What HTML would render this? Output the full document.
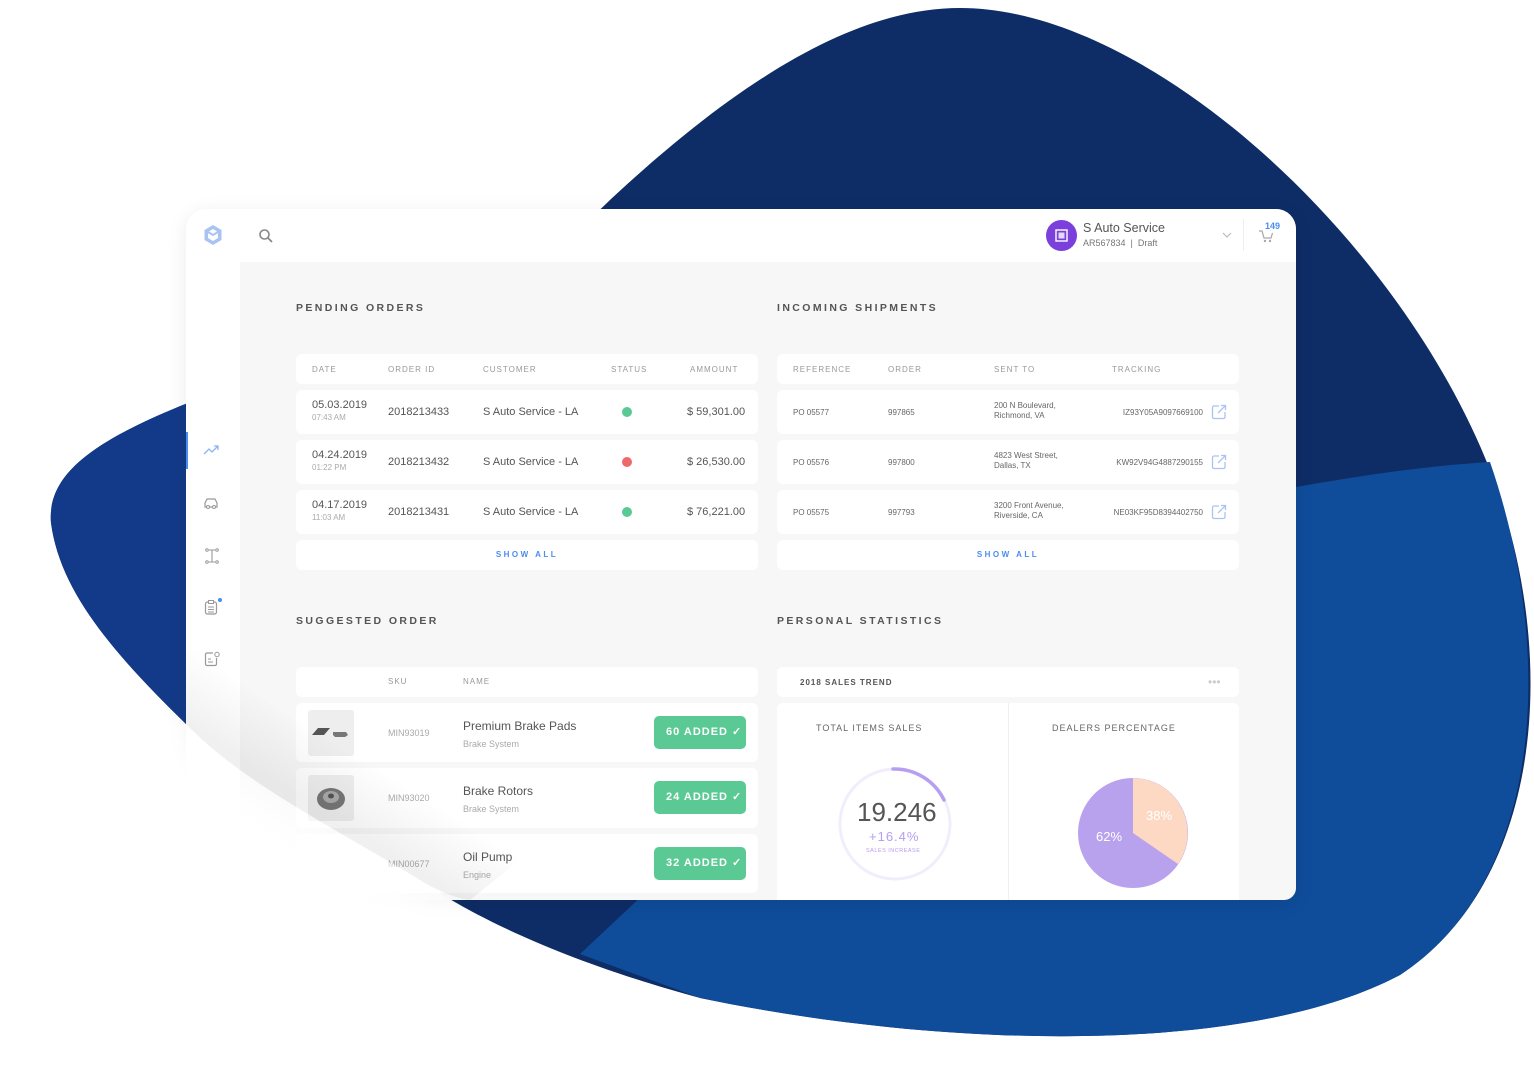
<!DOCTYPE html>
<html><head><meta charset="utf-8"><style>
*{margin:0;padding:0;box-sizing:border-box}
body{width:1534px;height:1081px;background:#fff;position:relative;overflow:hidden;font-family:"Liberation Sans",Arial,sans-serif;color:#555}
.abs{position:absolute}
#card{position:absolute;left:186px;top:209px;width:1110px;height:691px;border-radius:20px 20px 12px 0;background:#f7f7f7;overflow:hidden;box-shadow:0 4px 20px rgba(0,0,0,.08)}
.hdr{position:absolute;left:0;top:0;width:1110px;height:53px;background:#fff}
.side{position:absolute;left:0;top:53px;width:54px;height:640px;background:#fff}
.ttl{position:absolute;font-size:10.5px;letter-spacing:2.4px;color:#555;font-weight:bold}
.box{position:absolute;background:#fff;border-radius:6px}
.th{position:absolute;font-size:8px;letter-spacing:1px;color:#999}
.t{position:absolute;font-size:11px;color:#555;white-space:nowrap}
.s{position:absolute;font-size:8px;color:#aaa;white-space:nowrap}
.dot{position:absolute;width:10px;height:10px;border-radius:50%}
.sa{position:absolute;font-size:8px;letter-spacing:2.5px;color:#4a8cf0;font-weight:bold;width:100%;text-align:center;top:10px}
.btn{position:absolute;left:358px;width:92px;height:33px;background:#5ac994;border-radius:5px;color:#fff;font-size:11px;font-weight:bold;letter-spacing:1px;line-height:33px;padding-left:12px}
.img{position:absolute;left:12px;width:46px;height:46px;background:#eee;border-radius:3px}
</style></head><body>
<svg class="abs" style="left:0;top:0" width="1534" height="1081">
<path d="M51,523 C45,450 150,410 400,330 C470,300 560,250 610,200 C760,60 870,8 960,8 C1150,8 1400,240 1490,470 C1560,650 1545,880 1400,975 C1250,1055 950,1050 700,998 C560,960 470,915 420,880 C320,820 240,780 186,724 C110,650 60,590 51,523Z" fill="#0e2c66"/>
<path d="M51,523 C45,450 150,410 400,330 L600,330 L600,700 L420,880 C320,820 240,780 186,724 C110,650 60,590 51,523Z" fill="#133a88"/>
<path d="M1296,487 C1380,472 1440,465 1490,462 C1555,650 1545,880 1400,975 C1250,1055 950,1050 700,998 L580,954 L1000,560Z" fill="#0f4c9a"/>
</svg>
<div id="card">
 <div class="hdr"></div>
 <svg class="abs" style="left:17px;top:15px" width="20" height="22" viewBox="0 0 20 22"><path d="M10 1 L18.5 6 V16 L10 21 L1.5 16 V6Z" fill="#a9c3f3"/><path d="M10 5 L15 8 V14 L10 17 L5 14 V8Z" fill="#fff"/><path d="M5 8 L10 11 L15 8" stroke="#a9c3f3" stroke-width="2" fill="none"/></svg>
 <svg class="abs" style="left:72px;top:19px" width="16" height="16"><circle cx="6.5" cy="6.5" r="4.5" stroke="#888" stroke-width="1.6" fill="none"/><path d="M10 10 L14 14" stroke="#888" stroke-width="1.8"/></svg>
 <div class="abs" style="left:860px;top:11px;width:31px;height:31px;border-radius:50%;background:#7b3fdc"></div>
 <svg class="abs" style="left:868px;top:19px" width="15" height="15"><rect x="2" y="2" width="11" height="11" fill="none" stroke="#fff" stroke-width="1.4"/><rect x="4.5" y="4.5" width="6" height="6" fill="#fff" opacity=".8"/></svg>
 <div class="t" style="left:897px;top:12px;font-size:12.5px;color:#555">S Auto Service</div>
 <div class="t" style="left:897px;top:29px;font-size:9px;color:#777">AR567834 &nbsp;| &nbsp;Draft</div>
 <svg class="abs" style="left:1036px;top:22px" width="10" height="8"><path d="M1 2 L5 6 L9 2" stroke="#bbb" fill="none" stroke-width="1.2"/></svg>
 <div class="abs" style="left:1057px;top:10px;width:1px;height:32px;background:#eee"></div>
 <svg class="abs" style="left:1072px;top:20px" width="16" height="14"><path d="M1 2 H4 L6 9 H13 L14.5 4" stroke="#aaa" fill="none" stroke-width="1.3"/><circle cx="7" cy="12" r="1.2" fill="#aaa"/><circle cx="12" cy="12" r="1.2" fill="#aaa"/></svg>
 <div class="t" style="left:1079px;top:12px;font-size:9px;color:#4a8cf0;font-weight:bold">149</div>
 <div class="side"></div>
 <div class="abs" style="left:0;top:223px;width:2px;height:37px;background:#4a8cf0"></div>
 <svg class="abs" style="left:17px;top:236px" width="16" height="10"><path d="M1 9 L6 4 L9 7 L15 1 M11 1 H15 V5" stroke="#8db2f5" fill="none" stroke-width="1.3"/></svg>
 <svg class="abs" style="left:17px;top:288px" width="16" height="12"><path d="M2 6 L4 2 H12 L14 6 V10 H2Z" stroke="#999" fill="none" stroke-width="1.2"/><circle cx="5" cy="10" r="1.5" fill="#fff" stroke="#999"/><circle cx="11" cy="10" r="1.5" fill="#fff" stroke="#999"/></svg>
 <svg class="abs" style="left:19px;top:339px" width="14" height="16"><path d="M7 2 V14 M4 2 H10 M4 14 H10" stroke="#999" fill="none" stroke-width="1.1"/><circle cx="2" cy="2" r="1.3" fill="none" stroke="#999"/><circle cx="12" cy="2" r="1.3" fill="none" stroke="#999"/><circle cx="2" cy="14" r="1.3" fill="none" stroke="#999"/><circle cx="12" cy="14" r="1.3" fill="none" stroke="#999"/></svg>
 <svg class="abs" style="left:18px;top:389px" width="18" height="18"><rect x="1.5" y="4" width="11" height="12" rx="2" stroke="#999" fill="none" stroke-width="1.2"/><rect x="4.5" y="2.5" width="5" height="3" fill="#fff" stroke="#999"/><path d="M4 9 H10 M4 11.5 H10 M4 14 H10" stroke="#999"/><circle cx="16" cy="2" r="2" fill="#4a8cf0"/></svg>
 <svg class="abs" style="left:18px;top:442px" width="18" height="16"><path d="M9 2 H3 A1.5 1.5 0 0 0 1.5 3.5 V13 A1.5 1.5 0 0 0 3 14.5 H11 A1.5 1.5 0 0 0 12.5 13 V7" stroke="#999" fill="none" stroke-width="1.2"/><path d="M4 8 H7 M4 11 H9" stroke="#999"/><circle cx="13" cy="3.5" r="2.2" fill="none" stroke="#999"/></svg>

 <div class="ttl" style="left:110px;top:93px">PENDING ORDERS</div>
 <div class="ttl" style="left:591px;top:93px">INCOMING SHIPMENTS</div>
 <div class="ttl" style="left:110px;top:406px">SUGGESTED ORDER</div>
 <div class="ttl" style="left:591px;top:406px">PERSONAL STATISTICS</div>

 <div class="box" style="left:110px;top:145px;width:462px;height:30px">
  <div class="th" style="left:16px;top:11px">DATE</div><div class="th" style="left:92px;top:11px">ORDER ID</div><div class="th" style="left:187px;top:11px">CUSTOMER</div><div class="th" style="left:315px;top:11px">STATUS</div><div class="th" style="left:394px;top:11px">AMMOUNT</div>
 </div>
 <div class="box" style="left:110px;top:181px;width:462px;height:44px"><div class="t" style="left:16px;top:9px">05.03.2019</div><div class="s" style="left:16px;top:23px">07:43 AM</div><div class="t" style="left:92px;top:16px">2018213433</div><div class="t" style="left:187px;top:16px">S Auto Service - LA</div><div class="dot" style="left:326px;top:17px;background:#5ac994"></div><div class="t" style="left:391px;top:16px">$ 59,301.00</div></div>
 <div class="box" style="left:110px;top:231px;width:462px;height:44px"><div class="t" style="left:16px;top:9px">04.24.2019</div><div class="s" style="left:16px;top:23px">01:22 PM</div><div class="t" style="left:92px;top:16px">2018213432</div><div class="t" style="left:187px;top:16px">S Auto Service - LA</div><div class="dot" style="left:326px;top:17px;background:#ec6a6a"></div><div class="t" style="left:391px;top:16px">$ 26,530.00</div></div>
 <div class="box" style="left:110px;top:281px;width:462px;height:44px"><div class="t" style="left:16px;top:9px">04.17.2019</div><div class="s" style="left:16px;top:23px">11:03 AM</div><div class="t" style="left:92px;top:16px">2018213431</div><div class="t" style="left:187px;top:16px">S Auto Service - LA</div><div class="dot" style="left:326px;top:17px;background:#5ac994"></div><div class="t" style="left:391px;top:16px">$ 76,221.00</div></div>
 <div class="box" style="left:110px;top:331px;width:462px;height:30px"><div class="sa">SHOW ALL</div></div>

 <div class="box" style="left:591px;top:145px;width:462px;height:30px">
  <div class="th" style="left:16px;top:11px">REFERENCE</div><div class="th" style="left:111px;top:11px">ORDER</div><div class="th" style="left:217px;top:11px">SENT TO</div><div class="th" style="left:335px;top:11px">TRACKING</div>
 </div>
 <div class="box" style="left:591px;top:181px;width:462px;height:44px"><div class="s" style="left:16px;top:18px;color:#666">PO 05577</div><div class="s" style="left:111px;top:18px;color:#666">997865</div><div class="s" style="left:217px;top:11px;color:#666;line-height:10px">200 N Boulevard,<br>Richmond, VA</div><div class="s" style="right:36px;top:18px;color:#666">IZ93Y05A9097669100</div><svg class="abs" style="left:434px;top:14px" width="16" height="16"><path d="M8 2 H3 A1.5 1.5 0 0 0 1.5 3.5 V13 A1.5 1.5 0 0 0 3 14.5 H12.5 A1.5 1.5 0 0 0 14 13 V8 M7 9 L14.5 1.5 M10 1.5 H14.5 V6" stroke="#a9c3f3" fill="none" stroke-width="1.3"/></svg></div>
 <div class="box" style="left:591px;top:231px;width:462px;height:44px"><div class="s" style="left:16px;top:18px;color:#666">PO 05576</div><div class="s" style="left:111px;top:18px;color:#666">997800</div><div class="s" style="left:217px;top:11px;color:#666;line-height:10px">4823 West Street,<br>Dallas, TX</div><div class="s" style="right:36px;top:18px;color:#666">KW92V94G4887290155</div><svg class="abs" style="left:434px;top:14px" width="16" height="16"><path d="M8 2 H3 A1.5 1.5 0 0 0 1.5 3.5 V13 A1.5 1.5 0 0 0 3 14.5 H12.5 A1.5 1.5 0 0 0 14 13 V8 M7 9 L14.5 1.5 M10 1.5 H14.5 V6" stroke="#a9c3f3" fill="none" stroke-width="1.3"/></svg></div>
 <div class="box" style="left:591px;top:281px;width:462px;height:44px"><div class="s" style="left:16px;top:18px;color:#666">PO 05575</div><div class="s" style="left:111px;top:18px;color:#666">997793</div><div class="s" style="left:217px;top:11px;color:#666;line-height:10px">3200 Front Avenue,<br>Riverside, CA</div><div class="s" style="right:36px;top:18px;color:#666">NE03KF95D8394402750</div><svg class="abs" style="left:434px;top:14px" width="16" height="16"><path d="M8 2 H3 A1.5 1.5 0 0 0 1.5 3.5 V13 A1.5 1.5 0 0 0 3 14.5 H12.5 A1.5 1.5 0 0 0 14 13 V8 M7 9 L14.5 1.5 M10 1.5 H14.5 V6" stroke="#a9c3f3" fill="none" stroke-width="1.3"/></svg></div>
 <div class="box" style="left:591px;top:331px;width:462px;height:30px"><div class="sa">SHOW ALL</div></div>

 <div class="box" style="left:110px;top:458px;width:462px;height:30px"><div class="th" style="left:92px;top:10px">SKU</div><div class="th" style="left:167px;top:10px">NAME</div></div>
 <div class="box" style="left:110px;top:494px;width:462px;height:59px"><div class="img" style="top:7px"><svg width="46" height="46"><path d="M4 25 L10 18 H22 L16 25Z" fill="#555"/><path d="M25 22 H38 L40 25 L37 27 H27 L25 25Z" fill="#777"/></svg></div><div class="s" style="left:92px;top:25px;font-size:9px">MIN93019</div><div class="t" style="left:167px;top:16px;font-size:12px">Premium Brake Pads</div><div class="s" style="left:167px;top:36px;font-size:9px">Brake System</div><div class="btn" style="top:13px">60 ADDED ✓</div></div>
 <div class="box" style="left:110px;top:559px;width:462px;height:60px"><div class="img" style="top:7px"><svg width="46" height="46"><ellipse cx="23" cy="24" rx="14" ry="11" fill="#777"/><ellipse cx="23" cy="22" rx="8" ry="6" fill="#aaa"/><ellipse cx="23" cy="21" rx="3" ry="2.5" fill="#555"/></svg></div><div class="s" style="left:92px;top:25px;font-size:9px">MIN93020</div><div class="t" style="left:167px;top:16px;font-size:12px">Brake Rotors</div><div class="s" style="left:167px;top:36px;font-size:9px">Brake System</div><div class="btn" style="top:13px">24 ADDED ✓</div></div>
 <div class="box" style="left:110px;top:625px;width:462px;height:59px"><div class="s" style="left:92px;top:25px;font-size:9px">MIN00677</div><div class="t" style="left:167px;top:16px;font-size:12px">Oil Pump</div><div class="s" style="left:167px;top:36px;font-size:9px">Engine</div><div class="btn" style="top:13px">32 ADDED ✓</div></div>

 <div class="box" style="left:591px;top:458px;width:462px;height:30px"><div class="th" style="left:23px;top:11px;color:#555;font-weight:bold">2018 SALES TREND</div><div class="th" style="left:431px;top:8px;color:#ccc;font-size:12px;letter-spacing:0">•••</div></div>
 <div class="box" style="left:591px;top:494px;width:462px;height:210px"><div class="abs" style="left:231px;top:0;width:1px;height:210px;background:#f0f0f0"></div>
  <div class="th" style="left:39px;top:20px;color:#666;font-size:9px">TOTAL ITEMS SALES</div>
  <div class="th" style="left:275px;top:20px;color:#666;font-size:9px">DEALERS PERCENTAGE</div>
  <svg class="abs" style="left:60px;top:63px" width="116" height="116"><circle cx="58" cy="58" r="55" stroke="#f1eefb" stroke-width="3" fill="none"/><path d="M56 3 A55 55 0 0 1 107 34" stroke="#b69ef0" stroke-width="3.5" fill="none" stroke-linecap="round"/></svg>
  <div class="t" style="left:80px;top:94px;font-size:26px;color:#555">19.246</div>
  <div class="t" style="left:92px;top:126px;font-size:13px;color:#b69ef0;letter-spacing:1px">+16.4%</div>
  <div class="t" style="left:89px;top:145px;font-size:5.5px;color:#b69ef0;letter-spacing:.5px">SALES INCREASE</div>
  <svg class="abs" style="left:300px;top:74px" width="112" height="112"><circle cx="56" cy="56" r="55" fill="#b8a2ee"/><path d="M56 56 V1 A55 55 0 0 1 101 87Z" fill="#fdd9c3"/></svg>
  <div class="t" style="left:369px;top:105px;font-size:13px;color:#fff">38%</div>
  <div class="t" style="left:319px;top:126px;font-size:13px;color:#fff">62%</div>
 </div>
</div>
<svg class="abs" style="left:0;top:0" width="1534" height="1081">
<defs><linearGradient id="g" gradientUnits="userSpaceOnUse" x1="323" y1="812" x2="280" y2="879"><stop offset="0" stop-color="#fff" stop-opacity=".35"/><stop offset=".5" stop-color="#fff" stop-opacity=".95"/><stop offset="1" stop-color="#fff" stop-opacity="1"/></linearGradient>
<linearGradient id="g2" gradientUnits="userSpaceOnUse" x1="323" y1="812" x2="360" y2="754"><stop offset="0" stop-color="#000" stop-opacity=".06"/><stop offset="1" stop-color="#000" stop-opacity="0"/></linearGradient></defs>
<path d="M186,724 C240,780 320,820 420,880 C470,915 560,960 700,998 L700,1081 L0,1081 L0,724Z" fill="url(#g)"/>
<path d="M186,724 C240,780 320,820 420,880 C440,892 455,898 470,900 L520,860 C400,780 280,720 186,640Z" fill="url(#g2)"/>
</svg>
</body></html>
